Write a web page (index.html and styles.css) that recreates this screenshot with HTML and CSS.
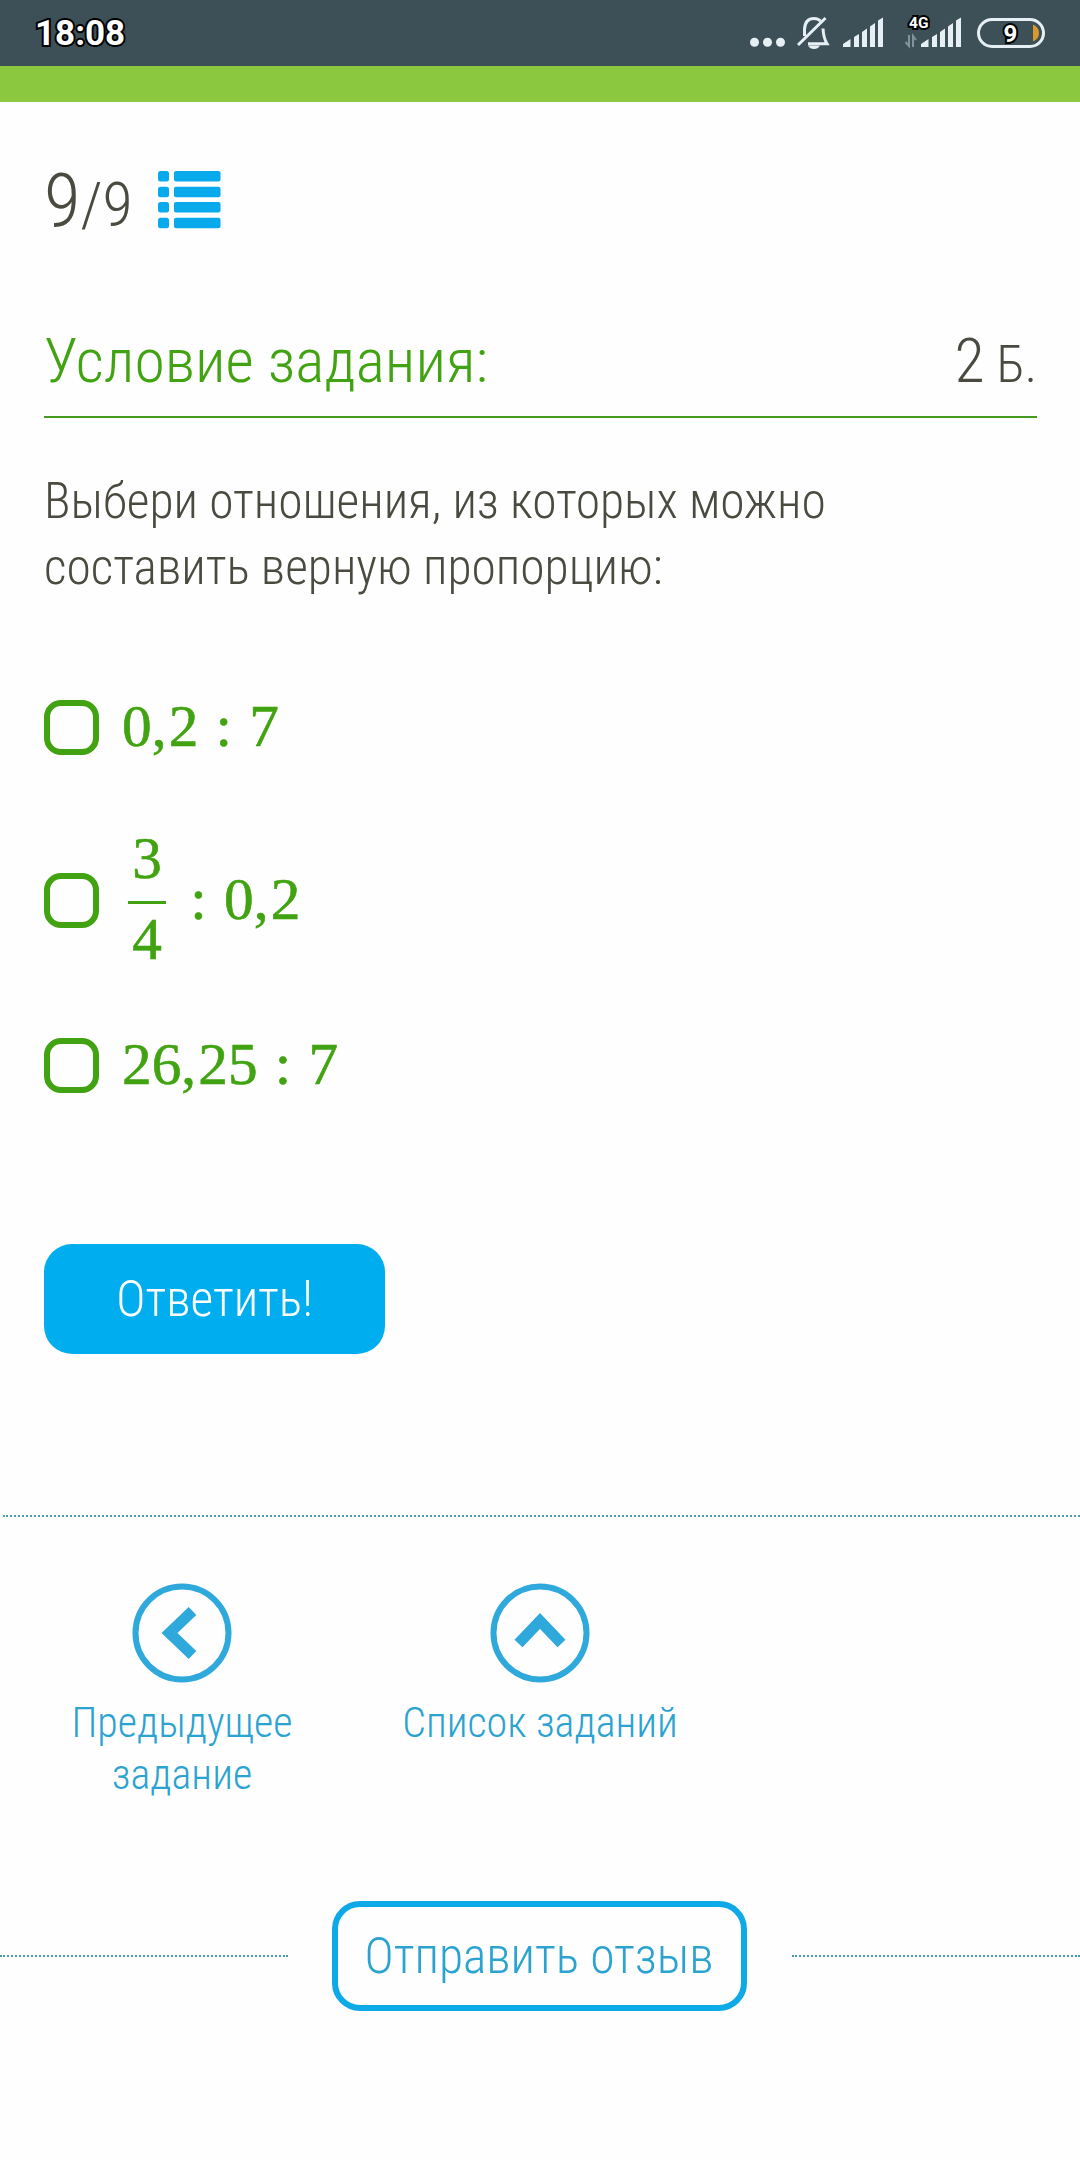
FILE: index.html
```html
<!DOCTYPE html>
<html lang="ru">
<head>
    <meta charset="UTF-8">
    <title>Условие задания</title>
    <link rel="stylesheet" href="styles.css">
</head>
<body>

<div class="status">
    <span class="clock">18:08</span>
    <div class="status_icons">
        <svg class="ic_dots" width="35" height="66" viewBox="750 0 35 66">
            <circle cx="754.5" cy="42.3" r="4.5"/><circle cx="767.5" cy="42.3" r="4.5"/><circle cx="780.5" cy="42.3" r="4.5"/>
        </svg>
        <svg class="ic_bell" width="33" height="66" viewBox="797 0 33 66">
            <g fill="none" stroke="#e6f0f4" stroke-width="3">
                <path d="M804.5 36V29.5Q805 18.5 814 18.5Q818 18.5 820.5 21"/>
                <path d="M823 28.5Q823.5 38 827 43.8H808"/>
                <path d="M798 45L825.5 18"/>
            </g>
            <path d="M808 45.5H820Q818 49 814 49T808 45.5Z"/>
        </svg>
        <svg class="ic_signal" width="41" height="66" viewBox="843 0 41 66">
            <path d="M843 47V44L850.5 39V47ZM854 47V37L859 34V47ZM862 47V32L867 28.5V47ZM870 47V26.5L875 23V47ZM878 47V20.5L883 17.5V47Z"/>
        </svg>
        <svg class="ic_4g" width="58" height="66" viewBox="904 0 58 66">
            <path d="M921 47V44L928.5 39V47ZM932 47V37L937 34V47ZM940 47V32L945 28.5V47ZM948 47V26.5L953 23V47ZM956 47V20.5L961 17.5V47Z"/>
            <path class="arrows" d="M909 35V46L905.5 42M913 47V36L916 40"/>
            <text x="909" y="28" font-size="15.5">4G</text>
        </svg>
        <svg class="ic_battery" width="69" height="66" viewBox="977 0 69 66">
            <rect x="978.5" y="19.5" width="65" height="27" rx="13.5" fill="none" stroke="#e6f0f4" stroke-width="3"/>
            <path d="M1033 24.5Q1039 27 1039 33T1033 41.5Z" fill="#d99a2b"/>
            <text x="1003.5" y="41.5" font-size="24">9</text>
        </svg>
    </div>
</div>
<div class="green_line"></div>

<div class="content">
    <div class="counter">
        <span class="num">9<small>/9</small></span>
        <svg width="63" height="58" viewBox="0 0 63 58">
            <g fill="#08aaeb">
                <rect x="0" y="0" width="11" height="10.5" rx="2.5"/><rect x="16" y="0" width="46.5" height="10.5" rx="2"/>
                <rect x="0" y="15.7" width="11" height="10.5" rx="2.5"/><rect x="16" y="15.7" width="46.5" height="10.5" rx="2"/>
                <rect x="0" y="31" width="11" height="10.5" rx="2.5"/><rect x="16" y="31" width="46.5" height="10.5" rx="2"/>
                <rect x="0" y="46.7" width="11" height="10.5" rx="2.5"/><rect x="16" y="46.7" width="46.5" height="10.5" rx="2"/>
            </g>
        </svg>
    </div>

    <div class="title">
        <h1>Условие задания:</h1>
        <span class="points">2 <small>Б.</small></span>
    </div>

    <p class="task">Выбери отношения, из которых можно<br>составить верную пропорцию:</p>

    <div class="answers">
        <label class="answer">
            <span class="box"></span>
            <span class="math">0<i>,</i>2<b>:</b>7</span>
        </label>
        <label class="answer fraction">
            <span class="box"></span>
            <span class="math"><span class="frac"><span class="top">3</span><span class="bottom">4</span></span><b>:</b>0<i>,</i>2</span>
        </label>
        <label class="answer">
            <span class="box"></span>
            <span class="math">26<i>,</i>25<b>:</b>7</span>
        </label>
    </div>

    <button class="sub">Ответить!</button>
</div>

<div class="nav">
    <a class="nav_item">
        <svg width="100" height="100" viewBox="0 0 100 100">
            <circle cx="50" cy="50" r="46.5"/>
            <path d="M60.5 28L37.5 50L60.5 72"/>
        </svg>
        <span>Предыдущее<br>задание</span>
    </a>
    <a class="nav_item">
        <svg width="100" height="100" viewBox="0 0 100 100">
            <circle cx="50" cy="50" r="46.5"/>
            <path d="M28.5 60.5L50 38L71.5 60.5"/>
        </svg>
        <span>Список заданий</span>
    </a>
</div>

<div class="feedback">
    <div class="dots"></div>
    <button class="feedback_btn">Отправить отзыв</button>
    <div class="dots"></div>
</div>

</body>
</html>
```
FILE: styles.css
```css
body{
    margin: 0;
    background: #fefefe;
    color: #4a4a40;
    font-family: "Roboto Condensed", Roboto, sans-serif;
    font-stretch: 75%;
    font-weight: 300;
    font-size: 49.5px;
}
button{
    font: inherit;
    box-sizing: border-box;
    padding: 0;
    border: none;
}
.status{
    display: flex;
    justify-content: space-between;
    height: 66px;
    padding: 0 34px 0 35px;
    background: #3d5058;
}
.clock{
    font: 700 35px/68px Roboto, sans-serif;
    font-stretch: 100%;
    color: white;
    -webkit-text-stroke: 4px #000;
    paint-order: stroke fill;
}
.status_icons{
    display: flex;
    fill: #e6f0f4;
}
.status_icons text{
    font-family: Roboto, sans-serif;
    font-weight: 700;
    font-stretch: 100%;
    fill: white;
    stroke: #000;
    stroke-width: 4px;
    paint-order: stroke;
}
.ic_dots{ margin-right: 12px;}
.ic_bell{ margin-right: 13px;}
.ic_signal{ margin-right: 20px;}
.ic_4g{ margin-right: 15px;}
.arrows{
    fill: none;
    stroke: #82939a;
    stroke-width: 2;
}
.green_line{
    height: 36px;
    background: #8cc83f;
}
.content{
    padding: 54px 43px 0 44px;
}
.counter{
    display: flex;
    height: 88px;
}
.counter .num{
    width: 114px;
    font-size: 75px;
    line-height: 88px;
    white-space: nowrap;
}
.counter small{ font-size: 62px;}
.counter svg{ margin-top: 15px;}
.title{
    display: flex;
    justify-content: space-between;
    height: 92px;
    margin-top: 80px;
    border-bottom: 2px solid #459b22;
    line-height: 74px;
}
.title h1{
    margin: 0;
    color: #41a311;
    font-size: 61.8px;
    font-weight: 300;
}
.points{
    font-size: 62px;
    word-spacing: -2px;
}
.points small{ font-size: 51.5px;}
.task{
    margin: 50px 0 0;
    line-height: 66.3px;
}
.answers{ margin-top: 98px;}
.answer{
    display: flex;
    align-items: center;
    height: 58px;
    color: #41a311;
}
.answer.fraction{
    height: 130px;
    margin: 79px 0 71px;
}
.box{
    box-sizing: border-box;
    width: 55px;
    height: 55px;
    margin-right: 23px;
    border: 6px solid #41a311;
    border-radius: 17px;
}
.math{
    display: flex;
    align-items: center;
    margin-top: -4px;
    font: 400 59.3px/60px "Liberation Serif", serif;
    -webkit-text-stroke: 0.6px #41a311;
}
.math i{
    width: 17px;
    font-style: normal;
}
.math b{
    width: 51px;
    font-weight: 400;
    text-align: center;
}
.frac{
    display: flex;
    flex-direction: column;
    align-items: center;
    width: 38px;
    margin: 0 7px 0 6px;
    line-height: 78px;
}
.frac .top{
    width: 38px;
    padding-bottom: 4px;
    border-bottom: 3px solid #41a311;
    text-align: center;
}
.frac .bottom{ margin-top: -4px;}
.sub{
    display: block;
    width: 341px;
    height: 110px;
    margin-top: 149px;
    border-radius: 28px;
    background: #00aeef;
    color: white;
}
.nav{
    display: flex;
    margin: 161px 0 0 3px;
    padding-top: 66px;
    border-top: 2px dotted #4a9bab;
    color: #2ba3d0;
    font-size: 42px;
    line-height: 52px;
    text-align: center;
}
.nav_item{
    display: flex;
    flex-direction: column;
    align-items: center;
    width: 358px;
}
.nav_item svg{
    margin-bottom: 14px;
    fill: none;
    stroke: #2fa8dc;
    stroke-width: 6;
}
.nav_item path{ stroke-width: 11;}
.feedback{
    display: flex;
    align-items: center;
    justify-content: space-between;
    margin-top: 100px;
}
.feedback .dots{
    width: 288px;
    border-top: 2px dotted #4a9bab;
}
.feedback_btn{
    width: 415px;
    height: 110px;
    margin-right: 2px;
    border: 6px solid #0eaae8;
    border-radius: 28px;
    background: none;
    color: #2ba3d0;
}
```
